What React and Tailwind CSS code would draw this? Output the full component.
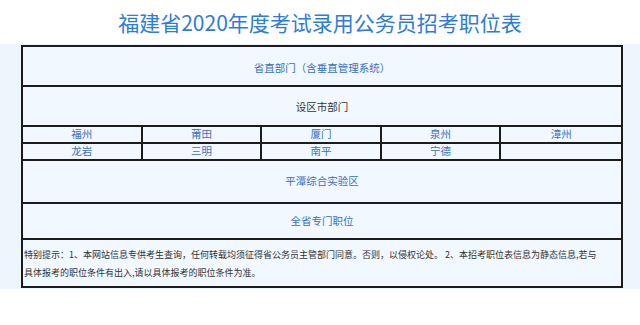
export default function App() {
  const row1 = ["福州", "莆田", "厦门", "泉州", "漳州"];
  const row2 = ["龙岩", "三明", "南平", "宁德", ""];
  return (
    <div className="w-[640px] h-[325px] bg-white font-['Noto_Sans_CJK_SC','Noto_Sans',sans-serif] overflow-hidden">
      <div className="h-[44px] flex items-center justify-center text-[21px] text-[#2d7be0] leading-none">
        福建省2020年度考试录用公务员招考职位表
      </div>
      <div className="bg-[#edf5fd] pl-[21px] pr-[17px] pt-[1px] pb-[1px]">
        <div className="border-2 border-[#1c1c1c] bg-[#f1f8ff] text-[10.5px] leading-none">
          <div className="h-[40px] border-b-2 border-[#1c1c1c] flex items-center justify-center pt-[5px] text-[#3a6ec6]">
            省直部门（含垂直管理系统）
          </div>
          <div className="h-[40px] border-b-2 border-[#1c1c1c] flex items-center justify-center pt-[3px] text-[#333333]">
            设区市部门
          </div>
          <div className="h-[17px] border-b-2 border-[#1c1c1c] grid grid-cols-5 text-[#3a6ec6]">
            {row1.map((c, i) => (
              <div key={i} className={`flex items-center justify-center ${i < 4 ? "border-r-2 border-[#1c1c1c]" : ""}`}>
                {c}
              </div>
            ))}
          </div>
          <div className="h-[17px] border-b-2 border-[#1c1c1c] grid grid-cols-5 text-[#3a6ec6]">
            {row2.map((c, i) => (
              <div key={i} className={`flex items-center justify-center ${i < 4 ? "border-r-2 border-[#1c1c1c]" : ""}`}>
                {c}
              </div>
            ))}
          </div>
          <div className="h-[43px] border-b-2 border-[#1c1c1c] flex items-center justify-center text-[#3a6ec6]">
            平潭综合实验区
          </div>
          <div className="h-[36px] border-b-2 border-[#1c1c1c] flex items-center justify-center text-[#3a6ec6]">
            全省专门职位
          </div>
          <div className="h-[46px] pt-[6px] pl-[1px] text-[9px] leading-[18px] text-[#333333] whitespace-nowrap">
            <div>特别提示：1、本网站信息专供考生查询，任何转载均须征得省公务员主管部门同意。否则，以侵权论处。 2、本招考职位表信息为静态信息,若与</div>
            <div>具体报考的职位条件有出入,请以具体报考的职位条件为准。</div>
          </div>
        </div>
      </div>
    </div>
  );
}
